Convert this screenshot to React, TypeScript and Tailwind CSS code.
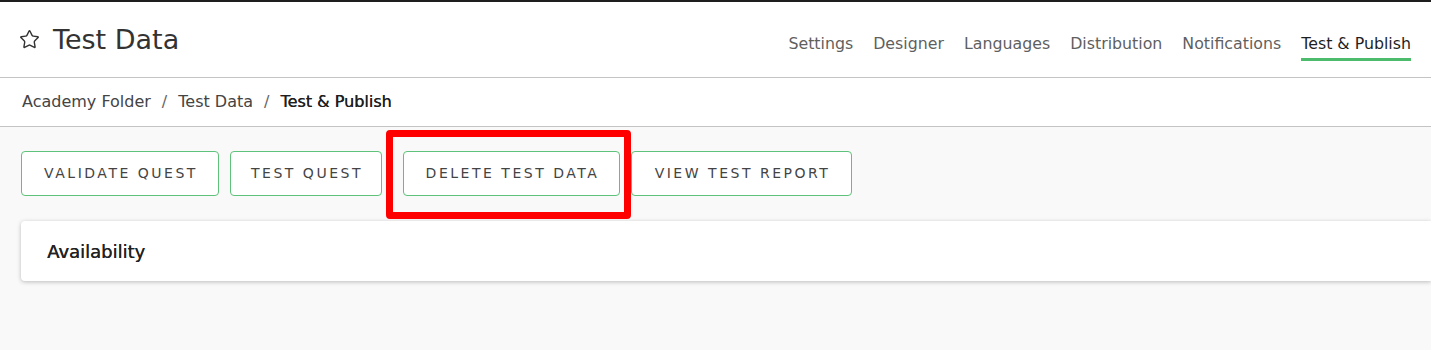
import { Star } from 'lucide-react';

const tabs = ['Settings', 'Designer', 'Languages', 'Distribution', 'Notifications', 'Test & Publish'];

const actions = [
  { label: 'VALIDATE QUEST', w: 'w-[198px]' },
  { label: 'TEST QUEST', w: 'w-[152px]' },
  { label: 'DELETE TEST DATA', w: 'w-[217px]', flagged: true },
  { label: 'VIEW TEST REPORT', w: 'w-[221px]' },
];

export default function App() {
  return (
    <div className="h-[350px] w-[1431px] overflow-hidden bg-[#f9f9f9] font-['DejaVu_Sans',sans-serif] text-[#333]">
      {/* top header */}
      <div className="flex h-[78px] items-center justify-between border-t-2 border-b border-t-[#1e1e1e] border-b-[#c4c4c4] bg-white pl-[19px] pr-[20px]">
        <div className="flex items-center gap-[13px]">
          <Star className="h-[21px] w-[21px] text-[#333]" strokeWidth={1.6} />
          <h1 className="text-[27px] leading-none text-[#333]">Test Data</h1>
        </div>
        <nav className="flex gap-[20px] self-stretch">
          {tabs.map((t) => {
            const active = t === 'Test & Publish';
            return (
              <div key={t} className="relative flex items-center pt-[9px]">
                <span className={active ? 'text-[15.8px] text-[#1f1f1f]' : 'text-[15.8px] text-[#5f5f5f]'}>{t}</span>
                {active && <div className="absolute bottom-[16px] left-0 right-0 h-[3px] bg-[#4cbb6c]" />}
              </div>
            );
          })}
        </nav>
      </div>

      {/* breadcrumb */}
      <div className="flex h-[49px] items-center gap-[11px] border-b border-[#c4c4c4] bg-white pl-[22px] text-[16px]">
        <span className="text-[#444]">Academy Folder</span>
        <span className="text-[#666]">/</span>
        <span className="text-[#444]">Test Data</span>
        <span className="text-[#666]">/</span>
        <span className="text-[#1f1f1f] [text-shadow:0.3px_0_0_#1f1f1f]">Test &amp; Publish</span>
      </div>

      {/* action buttons */}
      <div className="relative flex gap-[11px] pl-[21px] pt-[24px]">
        {actions.map((a) => (
          <button
            key={a.label}
            className={`${a.w} ${a.flagged ? 'ml-[10px]' : ''} h-[45px] rounded-[4px] border border-[#5ec27a] bg-white pl-[2px] text-[14px] tracking-[0.18em] text-[#444]`}
          >
            {a.label}
          </button>
        ))}
        <div className="pointer-events-none absolute left-[386px] top-[3px] h-[89px] w-[245px] rounded-[4px] border-[7px] border-[#ff0000]" />
      </div>

      {/* card */}
      <div className="ml-[21px] mt-[25px] flex h-[60px] items-center rounded-l-[4px] bg-white pl-[26px] shadow-[0_1px_4px_rgba(0,0,0,0.25)]">
        <h2 className="text-[18px] text-[#222] [text-shadow:0.4px_0_0_#222]">Availability</h2>
      </div>
    </div>
  );
}
